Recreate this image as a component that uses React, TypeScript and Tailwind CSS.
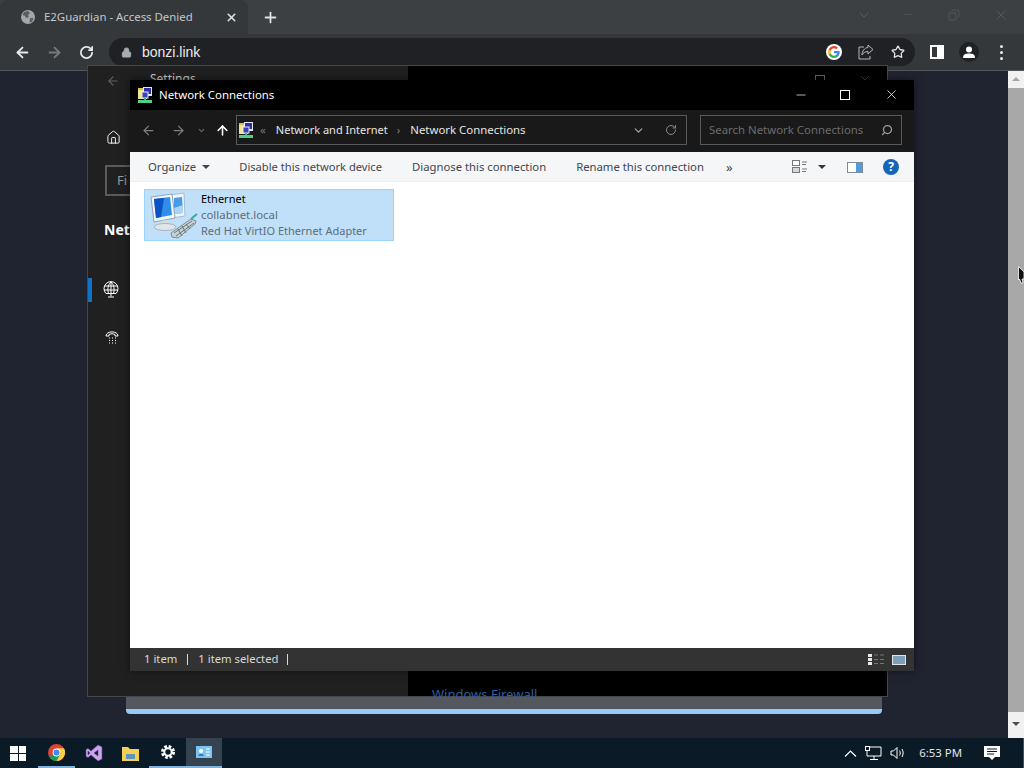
import { ArrowLeft, ArrowRight, ArrowUp, RotateCw, Lock, X, Plus, Star, ChevronDown, Minus, Copy, Search, Home } from 'lucide-react'

// small network-connections folder icon used in title bar and breadcrumb
function NetFolderIcon() {
  return (
    <svg width="16" height="16" viewBox="0 0 16 16" className="shrink-0">
      <rect x="1" y="1" width="9" height="11" fill="#f3e58e" />
      <rect x="1" y="1" width="9" height="2" fill="#d4c560" />
      <rect x="6" y="0" width="9" height="9" fill="#e6e9f5" />
      <rect x="7" y="1" width="7" height="6" fill="#2b2fa8" />
      <rect x="5" y="5" width="6" height="6" fill="#3a3fc0" stroke="#e6e9f5" strokeWidth="1" />
      <rect x="7" y="11" width="2" height="2" fill="#35b56a" />
      <rect x="1" y="13" width="14" height="3" fill="#4fd08a" />
    </svg>
  )
}

function EthernetIcon() {
  return (
    <svg width="50" height="48" viewBox="0 0 50 48" className="shrink-0">
      <path d="M21 4 L36 2 L37 25 L23 27 Z" fill="#eef4f9" stroke="#a9bccd" />
      <path d="M26 7 L34 6 L35 22 L26 23 Z" fill="#4a9be6" />
      <path d="M26 17 L35 14 L35 22 L26 23 Z" fill="#a8d4f5" />
      <path d="M3 6 L24 3 L27 27 L6 31 Z" fill="#f2f6fa" stroke="#8fa6ba" />
      <path d="M6 8 L22 6 L24 24 L8 27 Z" fill="#2f8fe8" />
      <path d="M6 8 L16 7 L13 26 L8 27 Z" fill="#0d52c4" />
      <path d="M13 30 L20 29 L21 33 L14 34 Z" fill="#d5dde3" />
      <ellipse cx="17" cy="36" rx="11" ry="3.500" fill="#dfe6eb" stroke="#a9b5bf" />
      <path d="M23 42 L43 28 L48 30 L47 33 L30 47 L24 46 Z" fill="#c9d2d5" stroke="#7d8b8f" />
      <path d="M26 42 L44 30 M28 45 L46 32 M30 38 L34 45 M34 35 L38 42 M38 33 L42 38" stroke="#65767a" strokeWidth="1" fill="none" />
      <path d="M43 28 L49 23" stroke="#3aa8a8" strokeWidth="2" />
    </svg>
  )
}

function GoogleIcon() {
  return (
    <svg width="16" height="16" viewBox="0 0 48 48" className="shrink-0">
      <circle cx="24" cy="24" r="24" fill="#fff" />
      <path fill="#4285F4" d="M41 24.500c0-1.300-.1-2.500-.3-3.700H24v7h9.600c-.4 2.200-1.700 4.100-3.500 5.400v4.500h5.700C39.100 34.600 41 30 41 24.500z" />
      <path fill="#34A853" d="M24 42c4.700 0 8.700-1.600 11.700-4.300L30 33.200c-1.600 1.100-3.600 1.700-6 1.700-4.600 0-8.500-3.100-9.900-7.300H8.300v4.600C11.200 38 17.100 42 24 42z" />
      <path fill="#FBBC05" d="M14.100 27.600c-.4-1.100-.6-2.300-.6-3.600s.2-2.500.6-3.600v-4.600H8.300C7.100 18.100 6.500 21 6.500 24s.6 5.900 1.800 8.200z" />
      <path fill="#EA4335" d="M24 13.100c2.600 0 4.900.9 6.700 2.600l5-5C32.700 7.900 28.700 6 24 6 17.100 6 11.200 10 8.300 15.800l5.800 4.600c1.400-4.200 5.300-7.300 9.900-7.300z" />
    </svg>
  )
}

function ChromeLogo() {
  return (
    <svg width="17" height="17" viewBox="0 0 48 48">
      <circle cx="24" cy="24" r="24" fill="#db4437" />
      <path d="M24 24 L3.200 36 A24 24 0 0 0 24 48 L36 27 Z" fill="#0f9d58" />
      <path d="M24 12 H45 A24 24 0 0 1 24 48 L36 27 Z" fill="#ffcd40" />
      <circle cx="24" cy="24" r="11" fill="#fff" />
      <circle cx="24" cy="24" r="8.500" fill="#4285f4" />
    </svg>
  )
}

function TabStrip() {
  return (
    <div className="flex h-[34px] shrink-0 bg-[#3c4043]">
      <div className="flex h-[34px] w-[248px] items-center rounded-t-lg bg-[#35383b] pl-[21px] pr-[9px]">
        <svg width="14" height="14" viewBox="0 0 14 14" className="shrink-0">
          <circle cx="7" cy="7" r="7" fill="#a4a7aa" />
          <path d="M3 2 L7 1 L9 3 L7 5 L8 7 L5 8 L4 6 L1.500 5 Z M9 8 L12.500 8 L11 12 L8.500 12.500 Z" fill="#5b5e61" />
        </svg>
        <span className="ml-[9px] flex-1 whitespace-nowrap text-[11.4px] text-[#c4c7c9]">E2Guardian - Access Denied</span>
        <X size={13} strokeWidth={3} className="mr-[1px] text-[#dcdee0]" />
      </div>
      <Plus size={17} strokeWidth={2.500} className="ml-[14px] mt-[9px] text-[#dfe1e3]" />
      <div className="ml-auto flex items-center pb-[5px] text-[#5f6366]">
        <ChevronDown size={16} strokeWidth={1.200} className="mr-[30px]" />
        <Minus size={13} strokeWidth={1} className="mr-[33px]" />
        <Copy size={12} strokeWidth={1.200} className="mr-[33px] scale-x-[-1]" />
        <X size={16} strokeWidth={1} className="mr-[15px]" />
      </div>
    </div>
  )
}

function ChromeToolbar() {
  return (
    <div className="flex h-[37px] shrink-0 items-center border-b border-[#55585b] bg-[#35383b]">
      <ArrowLeft size={17} strokeWidth={2.500} className="ml-[14px] text-[#e8eaed]" />
      <ArrowRight size={17} strokeWidth={2.500} className="ml-[15px] text-[#77797c]" />
      <RotateCw size={15} strokeWidth={2.800} className="ml-[16px] text-[#e8eaed]" />
      <div className="ml-[15px] flex h-[28px] w-[806px] items-center rounded-full bg-[#202124] pl-[12px] pr-[10px]">
        <Lock size={11} fill="#a9acaf" strokeWidth={2} className="text-[#a9acaf]" />
        <span className="ml-[10px] font-['Liberation_Sans',sans-serif] text-[14px] text-[#e8eaed]">bonzi.link</span>
        <div className="ml-auto flex items-center">
          <GoogleIcon />
          <svg width="16" height="16" viewBox="0 0 16 16" className="ml-[16px] text-[#b5b7ba]">
            <path d="M6 3H1v12h11v-3" stroke="currentColor" fill="none" />
            <path d="M10 1 L15 5.500 L10 10 V7.500 C7 7.500 5 9 4 11 C4 7 6.500 3.800 10 3.500 Z" stroke="currentColor" fill="none" />
          </svg>
          <Star size={14} strokeWidth={2.200} className="ml-[17px] text-[#e3e5e7]" />
        </div>
      </div>
      <div className="ml-[15px] flex h-[14px] w-[14px] justify-end border-2 border-white">
        <div className="h-full w-[5px] bg-white" />
      </div>
      <div className="ml-[15px] flex h-[20px] w-[20px] items-center justify-center rounded-full bg-[#202124]">
        <svg width="14" height="14" viewBox="0 0 14 14">
          <circle cx="7" cy="4.500" r="3" fill="#fff" />
          <path d="M1 13 C1 9 4 8.500 7 8.500 S13 9 13 13 Z" fill="#fff" />
        </svg>
      </div>
      <div className="ml-[21px] flex flex-col gap-[3px]">
        <div className="h-[3px] w-[3px] rounded-full bg-[#e8eaed]" />
        <div className="h-[3px] w-[3px] rounded-full bg-[#e8eaed]" />
        <div className="h-[3px] w-[3px] rounded-full bg-[#e8eaed]" />
      </div>
    </div>
  )
}

function SettingsWindow() {
  return (
    <>
      <div className="absolute left-[87px] top-[-6px] flex h-[632px] w-[801px] border border-[#45474b] bg-[#202020]">
        <div className="relative w-[320px] text-white">
          <ArrowLeft size={14} className="absolute left-[18px] top-[8px] text-[#5f6061]" />
          <span className="absolute left-[62px] top-[4px] text-[12px] text-[#c8c8c8]">Settings</span>
          <Home size={15} strokeWidth={1.500} className="absolute left-[18px] top-[64px]" />
          <div className="absolute left-[17px] top-[99px] h-[31px] w-[60px] border-2 border-[#5a5a5a] pl-[10px] text-[13px] leading-[27px] text-[#9a9a9a]">Fi</div>
          <span className="absolute left-[16px] top-[153px] text-[14px] font-bold">Netw</span>
          <div className="absolute left-0 top-[212px] h-[24px] w-[4px] bg-[#0f73c6]" />
          <svg width="16" height="17" viewBox="0 0 16 17" className="absolute left-[15px] top-[215px]">
            <path d="M3 12.500 A7 7 0 1 1 13 12.500 H3 Z M1.500 5H14.500M1 9H15M8 1V12.500M8 1C4.500 4 4.500 9 5.500 12.500M8 1C11.500 4 11.500 9 10.500 12.500M8 12.500V15.500M5 16H11" stroke="#fff" strokeWidth="1" fill="none" />
          </svg>
          <svg width="14" height="14" viewBox="0 0 14 14" className="absolute left-[17px] top-[264px]">
            <path d="M1 6 C1 0.500 13 0.500 13 6 H10 V4.500 C8 3.500 6 3.500 4 4.500 V6 Z" stroke="#fff" fill="none" />
            <path d="M4 8h1M7 8h1M10 8h1M4 10.500h1M7 10.500h1M10 10.500h1M4 13h1M7 13h1M10 13h1" stroke="#fff" />
          </svg>
        </div>
        <div className="relative flex-1 bg-black">
          <span className="absolute bottom-[-8px] left-[24px] text-[13px] text-[#2f5f9e]">Windows Firewall</span>
          <div className="absolute right-[62px] top-[9px] h-[10px] w-[10px] border border-[#666]" />
          <X size={14} strokeWidth={1} className="absolute right-[15px] top-[7px] text-[#666]" />
        </div>
      </div>
      <div className="absolute left-[126px] top-[626px] h-[17px] w-[756px] rounded-b-sm border-b-[5px] border-[#9ac8f5] bg-[#55575e]" />
    </>
  )
}

function ExplorerWindow() {
  return (
    <div className="absolute left-[130px] top-[9px] flex h-[591px] w-[784px] flex-col shadow-[0_0_8px_rgba(0,0,0,0.5)]">
      <div className="flex h-[30px] shrink-0 items-center bg-black pb-[1px] pl-[7px] text-white">
        <NetFolderIcon />
        <span className="ml-[6px] text-[11.4px]">Network Connections</span>
        <div className="ml-auto flex items-center">
          <Minus size={14} strokeWidth={1.200} />
          <div className="ml-[32px] h-[10px] w-[10px] border border-white" />
          <X size={15} strokeWidth={1.200} className="ml-[34px] mr-[15px]" />
        </div>
      </div>
      <div className="flex h-[42px] shrink-0 items-center bg-[#191919] pb-[2px]">
        <ArrowLeft size={15} strokeWidth={2} className="ml-[11px] text-[#7d7d7d]" />
        <ArrowRight size={15} strokeWidth={2} className="ml-[15px] text-[#7d7d7d]" />
        <ChevronDown size={9} strokeWidth={3} className="ml-[11px] text-[#6a6a6a]" />
        <ArrowUp size={15} strokeWidth={2.500} className="ml-[9px] text-white" />
        <div className="ml-[6px] flex h-[30px] w-[451px] items-center border border-[#5a5a5a] bg-[#191919] pl-[1px] text-[11.4px] text-[#e6e6e6]">
          <NetFolderIcon />
          <span className="ml-[6px] text-[#777]">«</span>
          <span className="ml-[10px] text-[11px]">Network and Internet</span>
          <span className="ml-[9px] text-[#777]">›</span>
          <span className="ml-[10px]">Network Connections</span>
          <ChevronDown size={13} strokeWidth={2.500} className="ml-auto text-[#a0a0a0]" />
          <RotateCw size={12} strokeWidth={2} className="ml-[20px] mr-[9px] text-[#8a8a8a]" />
        </div>
        <div className="ml-[13px] flex h-[30px] w-[202px] items-center whitespace-nowrap border border-[#5a5a5a] pl-[8px] pr-[8px] text-[11.4px] text-[#6c6c6c]">
          Search Network Connections
          <Search size={12} strokeWidth={2.500} className="ml-auto scale-x-[-1] text-[#a0a0a0]" />
        </div>
      </div>
      <div className="flex h-[30px] shrink-0 items-center whitespace-nowrap border-b border-[#eceef0] bg-[#f5f6f7] pl-[18px] pt-[1px] text-[11.3px] text-[#3f4650]">
        <span>Organize</span>
        <div className="ml-[6px] h-0 w-0 border-x-[4px] border-t-[4px] border-x-transparent border-t-[#3f4650]" />
        <div className="ml-[29px] flex gap-[30px]">
          <span className="text-[11.15px]">Disable this network device</span>
          <span>Diagnose this connection</span>
          <span>Rename this connection</span>
        </div>
        <span className="ml-[22px] text-[13px] leading-none">»</span>
        <div className="ml-auto mr-[15px] flex items-center">
          <svg width="16" height="14" viewBox="0 0 16 14">
            <rect x="0.500" y="0.500" width="7" height="5" fill="#fff" stroke="#777" />
            <rect x="0.500" y="7.500" width="7" height="5" fill="#d8d8d8" stroke="#777" />
            <path d="M10 2h5M10 4.500h4M10 9h5M10 11.500h4" stroke="#777" />
          </svg>
          <div className="ml-[10px] h-0 w-0 border-x-[4px] border-t-[4px] border-x-transparent border-t-[#2f3640]" />
          <div className="ml-[21px] flex h-[11px] w-[16px] border border-[#7c8a99] bg-white">
            <div className="ml-auto h-full w-[6px] bg-[#4d9be0]" />
          </div>
          <div className="ml-[20px] flex h-[16px] w-[16px] items-center justify-center rounded-full bg-[#1565b8] text-[12px] font-bold text-white">?</div>
        </div>
      </div>
      <div className="min-h-0 flex-1 bg-white pl-[14px] pt-[7px]">
        <div className="flex h-[52px] w-[250px] items-center border border-[#99d1ff] bg-[#bfe0f8] pl-[3px]">
          <EthernetIcon />
          <div className="ml-[3px] whitespace-nowrap text-[11px] leading-[16px]">
            <div className="text-black">Ethernet</div>
            <div className="text-[11.4px] text-[#5e6d78]">collabnet.local</div>
            <div className="text-[#5e6d78]">Red Hat VirtIO Ethernet Adapter</div>
          </div>
        </div>
      </div>
      <div className="flex h-[23px] shrink-0 items-center bg-[#333333] pl-[14px] text-[11.3px] text-[#d9d9d9]">
        <span>1 item</span>
        <div className="ml-[10px] h-[11px] w-px bg-[#d9d9d9]" />
        <span className="ml-[10px]">1 item selected</span>
        <div className="ml-[9px] h-[11px] w-px bg-[#d9d9d9]" />
        <div className="ml-auto mr-[8px] flex items-center gap-[8px]">
          <svg width="16" height="13" viewBox="0 0 16 13">
            <path d="M0 1h4v3H0zM0 5h4v3H0zM0 9h4v3H0z" fill="#e8e8e8" />
            <path d="M6 2h4M12 2h4M6 6.500h4M12 6.500h4M6 10.500h4M12 10.500h4" stroke="#777" />
          </svg>
          <div className="h-[10px] w-[14px] border border-[#dfe6ea] bg-[#7d9fb8]" />
        </div>
      </div>
    </div>
  )
}

function Scrollbar() {
  return (
    <div className="flex h-full w-[16px] flex-col items-center bg-[#f1f1f1]">
      <div className="mt-[6px] h-0 w-0 border-x-[4px] border-b-[4px] border-x-transparent border-b-[#a3a3a3]" />
      <div className="mt-[7px] h-[624px] w-full bg-[#a8a8a8]" />
      <div className="mt-[10px] h-0 w-0 border-x-[4px] border-t-[4px] border-x-transparent border-t-[#505050]" />
    </div>
  )
}

function Taskbar() {
  return (
    <div className="flex h-[30px] shrink-0 items-center bg-[#0a1a26] text-white">
      <div className="ml-[10px] grid h-[15px] w-[16px] grid-cols-2 gap-[1px]">
        <div className="bg-white" />
        <div className="bg-white" />
        <div className="bg-white" />
        <div className="bg-white" />
      </div>
      <div className="ml-[12px] flex h-[30px] w-[37px] items-center justify-center border-b-[2px] border-[#7fb2dc]">
        <ChromeLogo />
      </div>
      <div className="flex h-[30px] w-[37px] items-center justify-center">
        <svg width="18" height="18" viewBox="0 0 18 18">
          <path d="M13 1 L17 3 V15 L13 17 L6 11 L3 13.500 L1 12.500 V5.500 L3 4.500 L6 7 Z M13 6 L9 9 L13 12 Z M3 7 V11 L5 9 Z" fill="#c9a6e6" fillRule="evenodd" stroke="#6d3fa8" strokeWidth="0.6" />
        </svg>
      </div>
      <div className="flex h-[30px] w-[37px] items-center justify-center">
        <svg width="17" height="15" viewBox="0 0 17 15">
          <path d="M0 1h6l2 2h9v12H0z" fill="#f4cf57" />
          <rect x="4" y="8" width="9" height="5" fill="#5d94b8" />
        </svg>
      </div>
      <div className="flex h-[30px] w-[37px] items-center justify-center border-b-[2px] border-[#7fb2dc]">
        <svg width="14" height="14" viewBox="0 0 14 14">
          <circle cx="7" cy="7" r="5.500" fill="none" stroke="#fff" strokeWidth="3" strokeDasharray="2.600 1.720" />
          <circle cx="7" cy="7" r="3.700" fill="none" stroke="#fff" strokeWidth="2" />
        </svg>
      </div>
      <div className="flex h-[30px] w-[36px] items-center justify-center border-b-[2px] border-[#7fb2dc] bg-[#34434f]">
        <svg width="16" height="12" viewBox="0 0 16 12">
          <rect width="16" height="12" fill="#7cc4f2" />
          <circle cx="5" cy="5" r="2" fill="#fff" />
          <path d="M2 10 C3 7 7 7 8 10 Z" fill="#2f7fc0" />
          <path d="M10 3h4M10 6h4M10 9h4" stroke="#fff" />
        </svg>
      </div>
      <svg width="13" height="7" viewBox="0 0 13 7" className="ml-auto">
        <path d="M1 6.500 L6.500 1 L12 6.500" stroke="#fff" strokeWidth="1.200" fill="none" />
      </svg>
      <svg width="17" height="14" viewBox="0 0 17 14" className="ml-[8px]">
        <path d="M4 1h12v9H2V5M9 10v3M5 13.500h8" stroke="#fff" fill="none" />
        <rect x="0.500" y="0.500" width="4" height="4" stroke="#fff" fill="#0a1a26" />
      </svg>
      <svg width="16" height="14" viewBox="0 0 16 14" className="ml-[8px]">
        <path d="M1 5h2.500L7 1.500v11L3.500 9H1z M9.500 4.500c1 1.500 1 3.500 0 5M12 3c1.500 2.500 1.500 5.500 0 8" stroke="#fff" fill="none" />
      </svg>
      <span className="ml-[13px] text-[11.4px] text-[#e4e7e9]">6:53 PM</span>
      <svg width="16" height="15" viewBox="0 0 16 15" className="ml-[22px]">
        <path d="M0 0h16v11h-5l-3 3-3-3H0z" fill="#fff" />
        <path d="M3 3h10M3 5.500h10M3 8h7" stroke="#0a1a26" />
      </svg>
      <div className="ml-[23px] h-[30px] w-px bg-[#44525c]" />
    </div>
  )
}

export default function App() {
  return (
    <div className="flex h-[768px] w-[1024px] flex-col overflow-hidden bg-[#202431] font-['Noto_Sans',sans-serif]">
      <TabStrip />
      <ChromeToolbar />
      <div className="relative flex min-h-0 flex-1 justify-end">
        <SettingsWindow />
        <ExplorerWindow />
        <Scrollbar />
        <svg width="6" height="18" viewBox="0 0 6 18" className="absolute right-0 top-[195px]">
          <path d="M0.500 0.500 L6 6 V13 H4 L5 17 H3 L1.500 13 L0.500 14 Z" fill="#111" stroke="#fff" strokeWidth="0.800" />
        </svg>
      </div>
      <Taskbar />
    </div>
  )
}
